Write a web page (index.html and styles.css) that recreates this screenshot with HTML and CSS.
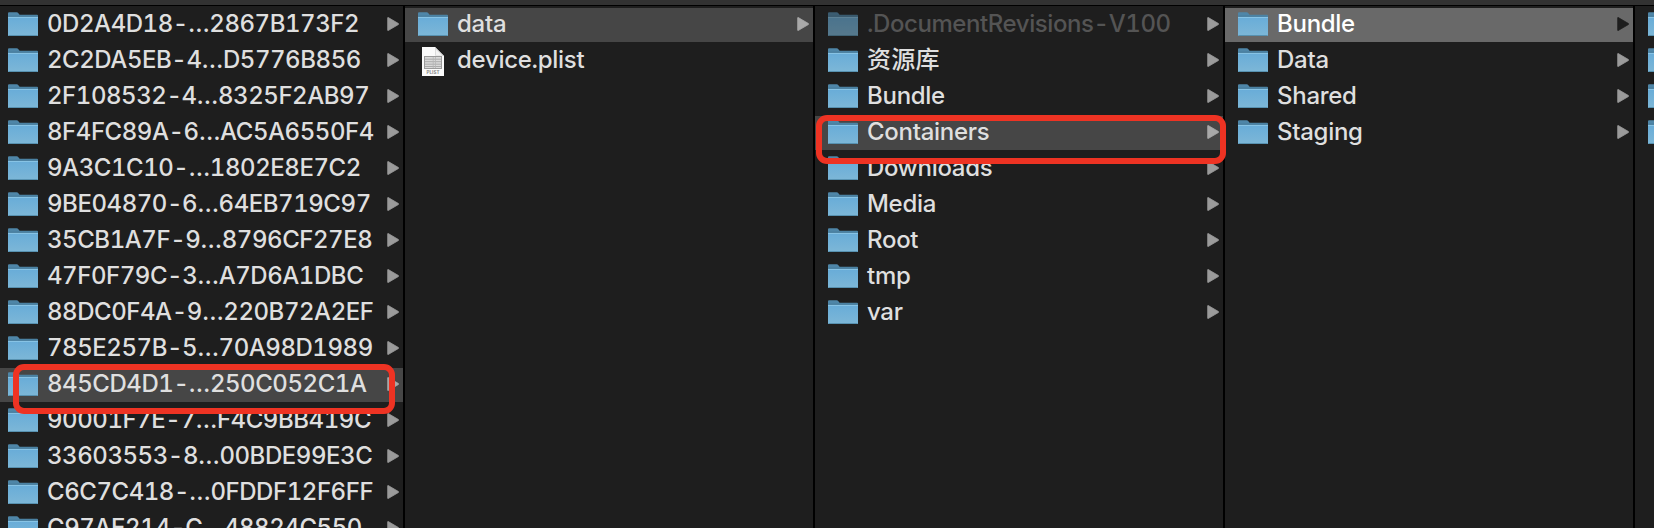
FILE: index.html
```
<!DOCTYPE html>
<html lang="zh-CN">
<head>
<meta charset="utf-8">
<title>Finder</title>
<link rel="stylesheet" href="styles.css">
</head>
<body>
<svg class="defs" width="0" height="0" aria-hidden="true">
  <defs>
    <linearGradient id="front" x1="0" y1="0" x2="0" y2="1">
      <stop offset="0" stop-color="#68acd8"/>
      <stop offset="1" stop-color="#7db7d7"/>
    </linearGradient>
    <symbol id="folder" viewBox="0 0 30 25">
      <path d="M0 25V1.2Q0 .2 1 .2H8.6Q9.8 .2 10.4 1.2L11.6 2.8H29Q30 2.8 30 3.8V24H0Z" fill="#4f86a8"/>
      <path d="M.5 4.2H29.5" stroke="#467a99" stroke-width="1"/>
      <path d="M0 5H30V23Q30 24 29 24H1Q0 24 0 23Z" fill="url(#front)"/>
      <path d="M0 5.4H30" stroke="#8fc8e8" stroke-width=".9"/>
      <path d="M.5 23.5H29.5" stroke="#5791b0" stroke-width="1"/>
    </symbol>
    <symbol id="arrow" viewBox="0 0 12 14">
      <path d="M.7 .8Q.7 .3 1.2 .5L11.4 6.5Q12 7 11.4 7.5L1.2 13.5Q.7 13.7 .7 13.2Z" fill="currentColor" stroke="currentColor" stroke-width=".8" stroke-linejoin="round"/>
    </symbol>
    <symbol id="plist" viewBox="0 0 22 29">
      <path d="M0 0H13L22 9V29H0Z" fill="#fbfbfb"/>
      <path d="M13 0L22 9H14.2Q13 9 13 7.8Z" fill="#dcdcdc"/>
      <path d="M14 2.5L20 8.4H14.6Q14 8.4 14 7.8Z" fill="#f4f4f4"/>
      <rect x="2.5" y="9.5" width="17" height="12" fill="#d9d9d9" stroke="#9b9b9b"/>
      <path d="M3 12.2H19M3 14.7H19M3 17.2H19M3 19.5H19" stroke="#a6a6a6" stroke-width=".9"/>
      <path d="M11.2 10V21M13.5 10V21" stroke="#b5b5b5" stroke-width=".8"/>
      <text x="11" y="27.3" text-anchor="middle" class="plist-tag">PLIST</text>
    </symbol>
  </defs>
</svg>
<div class="toolbar-edge"></div>
<main class="browser">
  <ul class="column ids">
    <li class="row"><svg class="folder"><use href="#folder"/></svg><span class="name">0D2A4D18-…2867B173F2</span><svg class="arrow"><use href="#arrow"/></svg></li>
    <li class="row"><svg class="folder"><use href="#folder"/></svg><span class="name">2C2DA5EB-4…D5776B856</span><svg class="arrow"><use href="#arrow"/></svg></li>
    <li class="row"><svg class="folder"><use href="#folder"/></svg><span class="name">2F108532-4…8325F2AB97</span><svg class="arrow"><use href="#arrow"/></svg></li>
    <li class="row"><svg class="folder"><use href="#folder"/></svg><span class="name">8F4FC89A-6…AC5A6550F4</span><svg class="arrow"><use href="#arrow"/></svg></li>
    <li class="row"><svg class="folder"><use href="#folder"/></svg><span class="name">9A3C1C10-…1802E8E7C2</span><svg class="arrow"><use href="#arrow"/></svg></li>
    <li class="row"><svg class="folder"><use href="#folder"/></svg><span class="name">9BE04870-6…64EB719C97</span><svg class="arrow"><use href="#arrow"/></svg></li>
    <li class="row"><svg class="folder"><use href="#folder"/></svg><span class="name">35CB1A7F-9…8796CF27E8</span><svg class="arrow"><use href="#arrow"/></svg></li>
    <li class="row"><svg class="folder"><use href="#folder"/></svg><span class="name">47F0F79C-3…A7D6A1DBC</span><svg class="arrow"><use href="#arrow"/></svg></li>
    <li class="row"><svg class="folder"><use href="#folder"/></svg><span class="name">88DC0F4A-9…220B72A2EF</span><svg class="arrow"><use href="#arrow"/></svg></li>
    <li class="row"><svg class="folder"><use href="#folder"/></svg><span class="name">785E257B-5…70A98D1989</span><svg class="arrow"><use href="#arrow"/></svg></li>
    <li class="row open"><svg class="folder"><use href="#folder"/></svg><span class="name">845CD4D1-…250C052C1A</span><svg class="arrow"><use href="#arrow"/></svg></li>
    <li class="row"><svg class="folder"><use href="#folder"/></svg><span class="name">90001F7E-7…F4C9BB419C</span><svg class="arrow"><use href="#arrow"/></svg></li>
    <li class="row"><svg class="folder"><use href="#folder"/></svg><span class="name">33603553-8…00BDE99E3C</span><svg class="arrow"><use href="#arrow"/></svg></li>
    <li class="row"><svg class="folder"><use href="#folder"/></svg><span class="name">C6C7C418-…0FDDF12F6FF</span><svg class="arrow"><use href="#arrow"/></svg></li>
    <li class="row"><svg class="folder"><use href="#folder"/></svg><span class="name">C97AE214-C…48824C550</span><svg class="arrow"><use href="#arrow"/></svg></li>
  </ul>
  <ul class="column">
    <li class="row open"><svg class="folder"><use href="#folder"/></svg><span class="name">data</span><svg class="arrow"><use href="#arrow"/></svg></li>
    <li class="row"><svg class="document"><use href="#plist"/></svg><span class="name">device.plist</span></li>
  </ul>
  <ul class="column">
    <li class="row hidden-item"><svg class="folder"><use href="#folder"/></svg><span class="name">.DocumentRevisions-V100</span><svg class="arrow"><use href="#arrow"/></svg></li>
    <li class="row"><svg class="folder"><use href="#folder"/></svg><span class="name cjk">资源库</span><svg class="arrow"><use href="#arrow"/></svg></li>
    <li class="row"><svg class="folder"><use href="#folder"/></svg><span class="name">Bundle</span><svg class="arrow"><use href="#arrow"/></svg></li>
    <li class="row open"><svg class="folder"><use href="#folder"/></svg><span class="name">Containers</span><svg class="arrow"><use href="#arrow"/></svg></li>
    <li class="row"><svg class="folder"><use href="#folder"/></svg><span class="name">Downloads</span><svg class="arrow"><use href="#arrow"/></svg></li>
    <li class="row"><svg class="folder"><use href="#folder"/></svg><span class="name">Media</span><svg class="arrow"><use href="#arrow"/></svg></li>
    <li class="row"><svg class="folder"><use href="#folder"/></svg><span class="name">Root</span><svg class="arrow"><use href="#arrow"/></svg></li>
    <li class="row"><svg class="folder"><use href="#folder"/></svg><span class="name">tmp</span><svg class="arrow"><use href="#arrow"/></svg></li>
    <li class="row"><svg class="folder"><use href="#folder"/></svg><span class="name">var</span><svg class="arrow"><use href="#arrow"/></svg></li>
  </ul>
  <ul class="column">
    <li class="row selected"><svg class="folder"><use href="#folder"/></svg><span class="name">Bundle</span><svg class="arrow"><use href="#arrow"/></svg></li>
    <li class="row"><svg class="folder"><use href="#folder"/></svg><span class="name">Data</span><svg class="arrow"><use href="#arrow"/></svg></li>
    <li class="row"><svg class="folder"><use href="#folder"/></svg><span class="name">Shared</span><svg class="arrow"><use href="#arrow"/></svg></li>
    <li class="row"><svg class="folder"><use href="#folder"/></svg><span class="name">Staging</span><svg class="arrow"><use href="#arrow"/></svg></li>
  </ul>
  <ul class="column">
    <li class="row"><svg class="folder"><use href="#folder"/></svg></li>
    <li class="row"><svg class="folder"><use href="#folder"/></svg></li>
    <li class="row"><svg class="folder"><use href="#folder"/></svg></li>
    <li class="row"><svg class="folder"><use href="#folder"/></svg></li>
  </ul>
</main>
<div class="mark mark-device"></div>
<div class="mark mark-containers"></div>
</body>
</html>
```
FILE: styles.css
```
* { box-sizing: border-box; }
body {
  margin: 0;
  width: 1654px;
  height: 528px;
  overflow: hidden;
  position: relative;
  background: #1e1e1e;
  color: #dfdfdf;
  font: 450 24px/34px Inter, "Noto Sans CJK SC", sans-serif;
  font-variant-numeric: tabular-nums;
}
.defs { position: absolute; }
.toolbar-edge {
  height: 6px;
  background: #323232;
  border-bottom: 1px solid #000;
}
.browser { display: flex; height: 522px; overflow: hidden; }
.column {
  flex: none;
  width: 410px;
  margin: 0;
  padding: 2px 0 0;
  list-style: none;
  border-right: 2px solid #000;
  display: flex;
  flex-direction: column;
  gap: 2px;
}
.ids { width: 405px; }
.row {
  flex: none;
  display: flex;
  align-items: center;
  height: 34px;
  padding: 0 4px 0 13px;
}
.ids .row { padding-left: 8px; }
.folder { flex: none; width: 30px; height: 25px; margin-top: -1px; }
.document { flex: none; width: 22px; height: 29px; margin: 0 4px; }
.name { flex: 1; margin: -2px 0 0 9px; white-space: nowrap; letter-spacing: -.28px; }
.ids .name { letter-spacing: -.45px; }
.arrow { flex: none; width: 12px; height: 14px; margin-top: -2px; color: #9b9b9b; }
.open { background: #464646; }
.open .arrow { color: #a9a9a9; }
.selected { background: #696969; color: #fff; }
.selected .arrow { color: #1e1e1e; }
.hidden-item .folder { opacity: .6; }
.hidden-item .name { color: #545454; letter-spacing: -.42px; }
.cjk { font-weight: 500; letter-spacing: .3px; }
.plist-tag { font: 700 4.6px Inter, sans-serif; fill: #8a8a8a; }
.mark {
  position: absolute;
  border: 6px solid #ee3323;
  border-radius: 11px;
}
.mark-device { left: 13px; top: 364px; width: 382px; height: 50px; }
.mark-containers { left: 816px; top: 115px; width: 410px; height: 49px; }
```
